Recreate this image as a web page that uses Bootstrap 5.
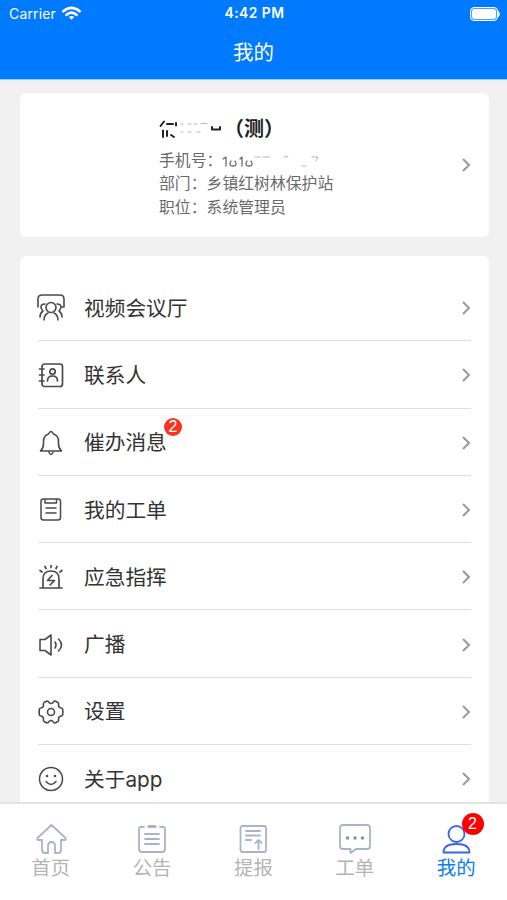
<!DOCTYPE html>
<html lang="zh-CN">
<head>
<meta charset="utf-8">
<meta name="viewport" content="width=device-width, initial-scale=1">
<title>我的</title>
<link href="https://cdn.jsdelivr.net/npm/bootstrap@5.3.0/dist/css/bootstrap.min.css" rel="stylesheet">
<style>
body{font-family:Inter,"Liberation Sans","Noto Sans CJK SC",sans-serif;background:#f1f1f1;color:#333;height:900px}
svg{fill:none;stroke:currentColor;stroke-linecap:round;stroke-linejoin:round;flex:none;display:block}
.app-head{background:#007aff;height:80px;border-bottom:1px solid #8fd0ff}
.status{height:27px;font-size:14px;line-height:27px;padding:0 7px 0 9px;letter-spacing:.15px}
.status .clock{font-weight:600;font-size:13.8px;letter-spacing:.5px}
.wifi{margin-left:6px}
.title{font-size:20.5px;line-height:51px;font-weight:400}
.main{padding:13px 18px 0 20px}
.panel{background:#fff;border-radius:6px}
.profile{height:144px;padding:0 18px 0 139px}
.pname{font-size:20px;line-height:30px;font-weight:600;color:#222;margin-bottom:5px}
.pinfo{font-size:15.85px;line-height:23.4px;color:#6a6a6a;margin-bottom:-3px}
.menu{margin-top:19px;padding:18px 18px 0}
.item{height:67.3px;border-bottom:1px solid #dedede;font-size:20.7px;padding-top:2px}
.item .ico{width:28px;height:28px;margin:0 19px 0 -1px;color:#4a4a4a}
.chev{width:10px;height:16px;color:#999;stroke-width:2;stroke-linecap:butt;stroke-linejoin:miter}
.bubble{width:18px;height:18px;font-family:"Liberation Sans",sans-serif;font-size:16px;line-height:18px;background:#f9321c;left:80px;top:-9px}
.tabs{height:98px;border-top:2px solid #e3e3e3;background:#fff;font-size:19.4px;color:#b4b4b4}
.tabs .tab{padding-top:17px;width:20%}
.tabs svg{width:34px;height:34px;color:#aab3cb;stroke-width:1.8}
.tabs .label{line-height:27px}
.tabs .current{color:#0a7cf5}
.tabs .current svg{color:#3d66dc}
.count{width:22px;height:22px;line-height:22px;font-family:"Liberation Sans",sans-serif;font-size:16px;background:#f00;left:56px;top:9px}
</style>
<script src="https://cdn.jsdelivr.net/npm/bootstrap@5.3.0/dist/js/bootstrap.bundle.min.js"></script>
</head>
<body class="d-flex flex-column overflow-hidden">
<header class="app-head text-white flex-shrink-0">
  <div class="status row g-0">
    <div class="col d-flex align-items-center">Carrier
      <svg class="wifi" width="19" height="15" viewBox="0 0 21 16" stroke-width="3" stroke-linecap="butt"><path d="M1.500 5.500Q10.500-2 19.500 5.500M5 9.500Q10.500 4.500 16 9.500"/><path d="m10.500 15-3-3q3-2.500 6 0Z" fill="currentColor" stroke="none"/></svg>
    </div>
    <div class="col-auto clock">4:42 PM</div>
    <div class="col d-flex align-items-center justify-content-end">
      <svg width="30" height="14" viewBox="0 0 30 14" stroke="none"><rect x=".5" y=".5" width="27" height="13" rx="3.500" fill="#4a9fff"/><rect x="2.500" y="2.500" width="23" height="9" rx="2" fill="#fff"/><path d="M28.500 4.500q2.500 2.500 0 5Z" fill="#68b1ff"/></svg>
    </div>
  </div>
  <h1 class="title text-center mb-0">我的</h1>
</header>
<main class="main flex-grow-1 overflow-hidden">
  <section class="panel profile d-flex align-items-center justify-content-between">
    <div>
      <div class="pname d-flex align-items-center">
        <svg width="65" height="22" viewBox="0 0 65 22" stroke="#333" stroke-width="2" stroke-linecap="butt"><path d="M5 3.500 1.500 8M8 6h6M17 5v2.500M4 12.500V19M8 13v5M12 17l3 2"/><path d="M22 6h2M29 6h3M35 6h3M42 5.500h6M22 14h2M29 14h3M38 14h3" stroke="#bbb" stroke-width="1.200"/><path d="M53 9v2.500h3M61 9v2.500h-4"/></svg>
        <span>（测）</span>
      </div>
      <div class="pinfo">
        <div class="d-flex align-items-center">手机号：<svg width="102" height="16" viewBox="0 0 102 16" stroke="#888" stroke-width="1.300"><path d="m1 6 3-2v9M9 8q-3 5 2 5t2-5M18 6l2-2v9M25 8q-3 5 2 5t2-5"/><path d="M33 4h5M41 4h7M62 4q2-2 4 0M80 13h4M90 4h6l-2 4" stroke="#b5b5b5" stroke-width="1"/></svg></div>
        <div>部门：乡镇红树林保护站</div>
        <div>职位：系统管理员</div>
      </div>
    </div>
    <svg class="chev" viewBox="0 0 10 16"><path d="m2 2 6 6-6 6"/></svg>
  </section>
  <section class="panel menu">
    <div class="item d-flex align-items-center">
      <svg class="ico" viewBox="0 0 28 28" stroke-width="1.600"><path d="M1 13V5q0-4 4-4h18q4 0 4 4v8h-2M8 10q-4 0-4 3 0 2 2 4-3 2-3 6M20 10q4 0 4 3 0 2-2 4 3 2 3 6"/><circle cx="14" cy="13.500" r="5"/><path d="M11 19q-4 2-4 7M17 19q4 2 4 7"/></svg>
      <span>视频会议厅</span><svg class="chev ms-auto" viewBox="0 0 10 16"><path d="m2 2 6 6-6 6"/></svg>
    </div>
    <div class="item d-flex align-items-center">
      <svg class="ico" viewBox="0 0 28 28" stroke-width="1.700"><rect x="5" y="3" width="20.500" height="22.500" rx="2.500"/><circle cx="15.500" cy="10.500" r="2.700"/><path d="M10.500 20q0-5 5-5t5 5M2.500 8H7M2.500 14H7M2.500 20H7"/></svg>
      <span>联系人</span><svg class="chev ms-auto" viewBox="0 0 10 16"><path d="m2 2 6 6-6 6"/></svg>
    </div>
    <div class="item d-flex align-items-center">
      <svg class="ico" viewBox="0 0 28 28" stroke-width="1.600"><path d="M3.500 22h21q-3-3-3-7v-2.500q0-6-5-7.500Q14 0 11.500 5q-5 1.500-5 7.500V15q0 4-3 7ZM12 23.500q2 4 4 0"/></svg>
      <span class="position-relative">催办消息<span class="bubble position-absolute rounded-circle text-white text-center">2</span></span><svg class="chev ms-auto" viewBox="0 0 10 16"><path d="m2 2 6 6-6 6"/></svg>
    </div>
    <div class="item d-flex align-items-center">
      <svg class="ico" viewBox="0 0 28 28" stroke-width="1.500"><rect x="4" y="3" width="19.500" height="21" rx="2.500"/><path d="M8 3.500V7h11.500V3.500M9 12h10M9 17h10"/></svg>
      <span>我的工单</span><svg class="chev ms-auto" viewBox="0 0 10 16"><path d="m2 2 6 6-6 6"/></svg>
    </div>
    <div class="item d-flex align-items-center">
      <svg class="ico" viewBox="0 0 28 28" stroke-width="1.700"><path d="M3 25h22M6 25V16q0-8 8-8t8 8v9M15 12.500l-4.500 5h7l-4.500 4.500M14 2.500v2M8 3.500l1 2M20 3.500l-1 2M3 7.500l2 1.500M25 7.500l-2 1.500"/></svg>
      <span>应急指挥</span><svg class="chev ms-auto" viewBox="0 0 10 16"><path d="m2 2 6 6-6 6"/></svg>
    </div>
    <div class="item d-flex align-items-center">
      <svg class="ico" viewBox="0 0 28 28" stroke-width="1.600"><path d="M3 8.500h5L14 4v20l-6-4.500H3ZM18 11q2 3 0 6M21.500 8q6 6 0 12"/></svg>
      <span>广播</span><svg class="chev ms-auto" viewBox="0 0 10 16"><path d="m2 2 6 6-6 6"/></svg>
    </div>
    <div class="item d-flex align-items-center">
      <svg class="ico" viewBox="0 0 28 28" stroke-width="1.600"><path d="M10 3q1.500 0 2 1.500 2 2 4 0 .5-1.500 2-1.500l3 1.500q1 .8.500 2.500 0 2.500 2.500 3 1.800.3 1.800 1.800v4.400q0 1.500-1.800 1.800-2.500.5-2.500 3 .5 1.700-.5 2.500l-3 1.500q-1.500 0-2-1.500-2-2-4 0-.5 1.500-2 1.500l-3-1.500q-1-.8-.5-2.500 0-2.500-2.500-3-1.800-.3-1.800-1.800v-4.400q0-1.500 1.800-1.800 2.500-.5 2.500-3-.5-1.700.5-2.500Z"/><circle cx="14" cy="14" r="3.500"/></svg>
      <span>设置</span><svg class="chev ms-auto" viewBox="0 0 10 16"><path d="m2 2 6 6-6 6"/></svg>
    </div>
    <div class="item d-flex align-items-center">
      <svg class="ico" viewBox="0 0 28 28" stroke-width="1.500"><circle cx="14" cy="14" r="11.500"/><path d="M9 16.500q5 6 10 0"/><g fill="currentColor" stroke="none"><circle cx="10" cy="11" r="1.300"/><circle cx="18" cy="11" r="1.300"/></g></svg>
      <span>关于app</span><svg class="chev ms-auto" viewBox="0 0 10 16"><path d="m2 2 6 6-6 6"/></svg>
    </div>
  </section>
</main>
<nav class="tabs d-flex flex-shrink-0">
  <div class="tab d-flex flex-column align-items-center"><svg viewBox="0 0 34 34"><path d="M17.500 4 3.500 17q-1 2 1 2H8v10q0 3 3 3h3v-7q0-4 3.500-4t3.500 4v7h3q3 0 3-3V19h3.500q2 0 1-2Z"/></svg><span class="label">首页</span></div>
  <div class="tab d-flex flex-column align-items-center"><svg viewBox="0 0 34 34"><path d="M9 6H6q-2 0-2 2v20q0 3 3 3h20q3 0 3-3V8q0-2-2-2h-3M10 13h14M10 18h14M10 23h14"/><path d="M14 5.500h6" stroke-width="3"/></svg><span class="label">公告</span></div>
  <div class="tab d-flex flex-column align-items-center"><svg viewBox="0 0 34 34"><rect x="4.500" y="5" width="25.500" height="26" rx="2"/><path d="M10 10h14M10 14.500h14M10 19h5M22.500 28v-9m-3 3 3-3 3 3"/></svg><span class="label">提报</span></div>
  <div class="tab d-flex flex-column align-items-center"><svg viewBox="0 0 34 34"><path d="M5 4h24q3 0 3 3v18q0 3-3 3H18l-5.500 4v-4H5q-3 0-3-3V7q0-3 3-3Z"/><g fill="#8792ae" stroke="none"><circle cx="9.500" cy="17" r="1.800"/><circle cx="17" cy="17" r="1.800"/><circle cx="24.500" cy="17" r="1.800"/></g></svg><span class="label">工单</span></div>
  <div class="tab current position-relative d-flex flex-column align-items-center"><svg viewBox="0 0 34 34"><circle cx="17.500" cy="13" r="8"/><path d="M4.500 31.500q0-8.500 13-8.500t13 8.500Z"/></svg><span class="label">我的</span><span class="count position-absolute rounded-circle text-white text-center">2</span></div>
</nav>
</body>
</html>
